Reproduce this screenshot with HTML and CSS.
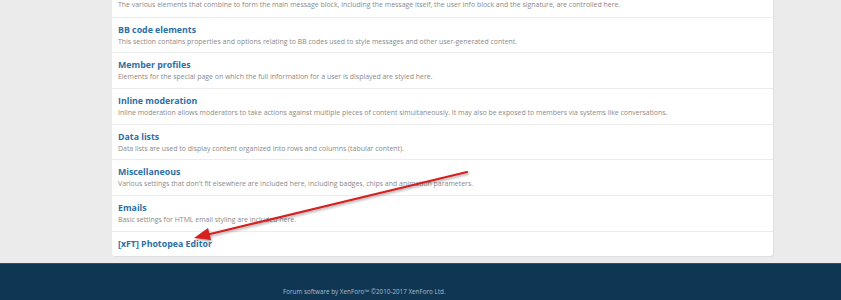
FILE: index.html
```html
<!DOCTYPE html>
<html lang="en">
<head>
    <meta charset="UTF-8">
    <title>Style properties</title>
    <link rel="stylesheet" href="styles.css">
</head>
<body>
    <div class="page">
        <div class="block">
            <div class="row row-first">
                <div class="row-desc">The various elements that combine to form the main message block, including the message itself, the user info block and the signature, are controlled here.</div>
            </div>
            <div class="row">
                <a class="row-title" href="#">BB code elements</a>
                <div class="row-desc">This section contains properties and options relating to BB codes used to style messages and other user-generated content.</div>
            </div>
            <div class="row">
                <a class="row-title" href="#">Member profiles</a>
                <div class="row-desc">Elements for the special page on which the full information for a user is displayed are styled here.</div>
            </div>
            <div class="row">
                <a class="row-title" href="#">Inline moderation</a>
                <div class="row-desc">Inline moderation allows moderators to take actions against multiple pieces of content simultaneously. It may also be exposed to members via systems like conversations.</div>
            </div>
            <div class="row">
                <a class="row-title" href="#">Data lists</a>
                <div class="row-desc">Data lists are used to display content organized into rows and columns (tabular content).</div>
            </div>
            <div class="row">
                <a class="row-title" href="#">Miscellaneous</a>
                <div class="row-desc">Various settings that don't fit elsewhere are included here, including badges, chips and animation parameters.</div>
            </div>
            <div class="row">
                <a class="row-title" href="#">Emails</a>
                <div class="row-desc">Basic settings for HTML email styling are included here.</div>
            </div>
            <div class="row row-last">
                <a class="row-title" href="#">[xFT] Photopea Editor</a>
            </div>
        </div>
    </div>

    <footer class="footer">
        <div class="footer-copy">Forum software by XenForo&trade; &copy;2010-2017 XenForo Ltd.</div>
    </footer>

    <!-- annotation arrow drawn over the screenshot -->
    <svg class="annotation" width="841" height="300" viewBox="0 0 841 300">
        <defs>
            <filter id="shade" x="-10%" y="-50%" width="120%" height="200%">
                <feDropShadow dx="1" dy="1.5" stdDeviation="1" flood-color="#000" flood-opacity="0.35"/>
            </filter>
        </defs>
        <g filter="url(#shade)">
            <line x1="467" y1="172" x2="206" y2="235" stroke="#d42020" stroke-width="2.2" stroke-linecap="round"/>
            <polygon points="194,238 208,228 211,240" fill="#d42020"/>
        </g>
    </svg>
</body>
</html>
```

FILE: styles.css
```css
body {
    margin: 0;
    background: #ebebeb;
    font-family: "Open Sans", "Noto Sans", sans-serif;
    color: #141414;
    overflow: hidden;
}
.page {
    width: 661px;
    margin: 0 0 0 112px;
}
.block {
    background: #fff;
    border-radius: 0 0 3px 3px;
    box-shadow: 1px 1px 1px rgba(0, 0, 0, 0.06);
}
.row {
    padding: 6px 6px 5px;
    border-top: 1px solid #ececec;
    height: 23.67px;
}
.row-first {
    border-top: none;
    padding: 0 6px 6px;
    height: 10.67px;
}
.row-last {
    height: 13px;
}
.row-title {
    display: block;
    height: 13px;
    line-height: 13px;
    font-size: 8.8px;
    font-weight: bold;
    color: #2b6fa8;
    text-decoration: none;
}
.row-desc {
    height: 10.67px;
    line-height: 10.67px;
    font-size: 6.95px;
    color: #8a8a8a;
    white-space: nowrap;
}
.footer {
    margin-top: 7px;
    height: 37px;
    background: #0f3653;
    border-top: 1px solid #2d4f69;
    box-sizing: border-box;
}
.footer-copy {
    padding: 23px 0 0 283px;
    font-size: 6.3px;
    line-height: 10px;
    color: #a9bccd;
}
.annotation {
    position: absolute;
    left: 0;
    top: 0;
    pointer-events: none;
}
```
